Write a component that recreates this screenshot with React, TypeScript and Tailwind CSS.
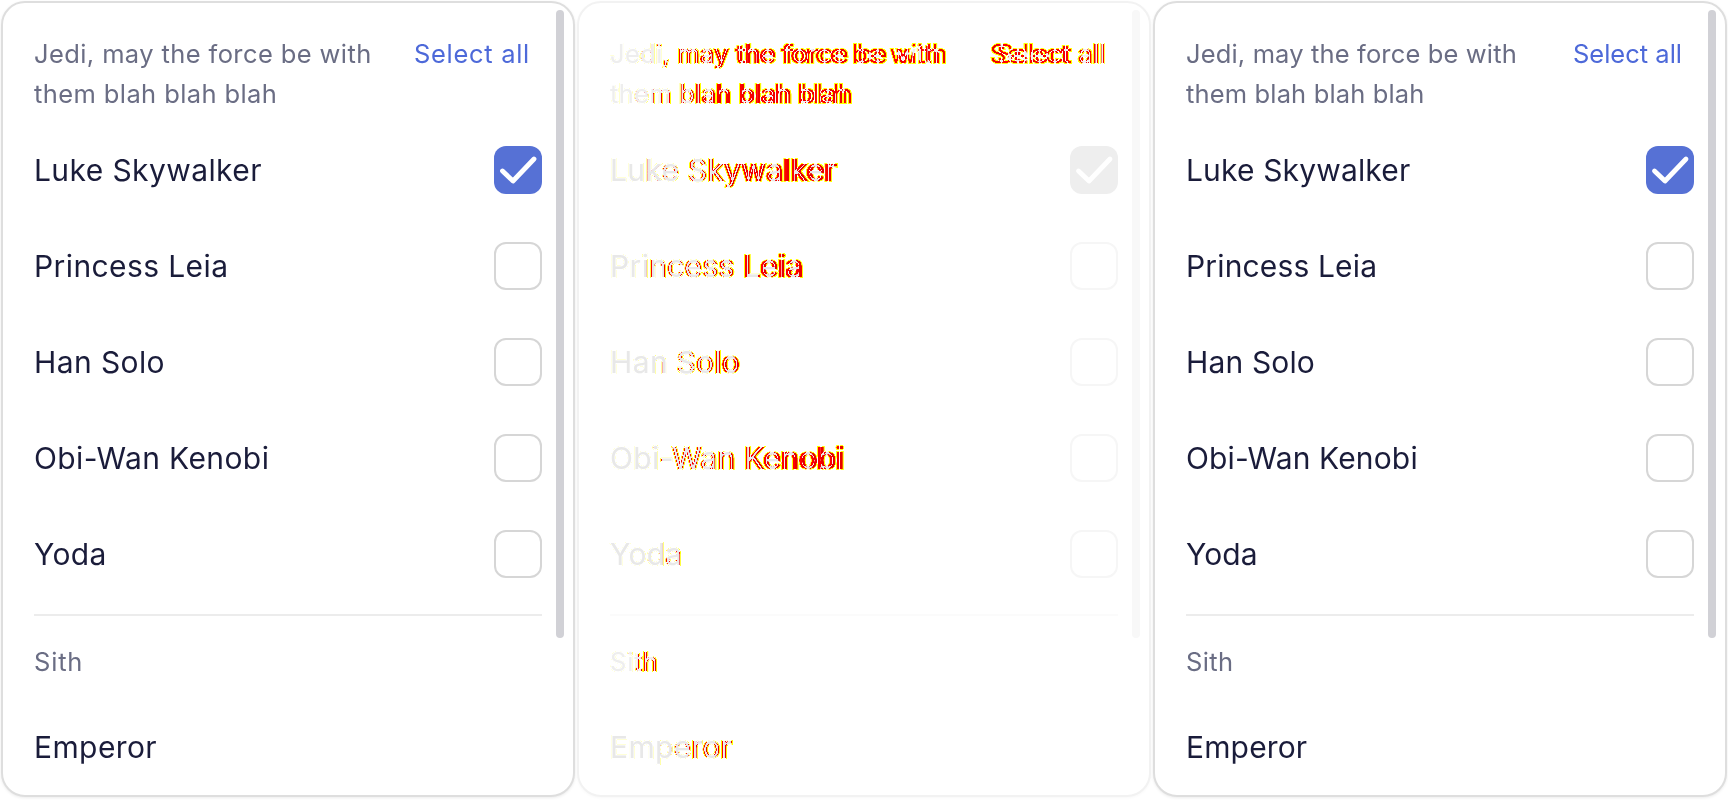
import React from 'react';

type Mode = 'expected' | 'diff' | 'actual';

const jedi = [
  { name: 'Luke Skywalker', checked: true },
  { name: 'Princess Leia', checked: false },
  { name: 'Han Solo', checked: false },
  { name: 'Obi-Wan Kenobi', checked: false },
  { name: 'Yoda', checked: false },
];

type LabelProps = {
  mode: Mode;
  text: string;
  size: string;
  color: string;  // normal colour
  faded: string;  // colour in the diff column
  track: string;  // expected render runs a little wider
  trackB: string; // actual render
  right?: boolean;
  wrap?: boolean;
};

// diff column: faded text, then both renders xor-ed on top (red core, yellow fringe)
const Label = ({ mode, text, size, color, faded, track, trackB, right, wrap }: LabelProps) => {
  const box = `${size} ${wrap ? '' : 'whitespace-nowrap'} ${right ? 'text-right' : ''}`;
  if (mode === 'expected') return <div className={`${box} ${color} ${track}`}>{text}</div>;
  if (mode === 'actual') return <div className={`${box} ${color} ${trackB}`}>{text}</div>;
  return (
    <div className={`relative ${box}`}>
      <div className={`${faded} ${track}`}>{text}</div>
      <div className="absolute inset-0 isolate bg-white mix-blend-multiply brightness-[1.35] contrast-[2]">
        <div className={`absolute inset-0 text-[#ffff00] [-webkit-text-stroke:2px_#ffff00] ${track}`}>{text}</div>
        <div className={`absolute inset-0 text-[#0000ff] [-webkit-text-stroke:2px_#0000ff] mix-blend-difference ${trackB}`}>{text}</div>
      </div>
      <div className="absolute inset-0 isolate bg-white mix-blend-multiply brightness-150 contrast-[4]">
        <div className={`absolute inset-0 text-[#ff0000] ${track}`}>{text}</div>
        <div className={`absolute inset-0 text-[#00ffff] mix-blend-difference ${trackB}`}>{text}</div>
      </div>
    </div>
  );
};

const Box = ({ checked, diff }: { checked: boolean; diff: boolean }) => {
  if (!checked)
    return (
      <div className={`h-12 w-12 rounded-[12px] border-2 ${diff ? 'border-[#f6f6f6]' : 'border-[#d6d6d6]'}`} />
    );
  return (
    <div className={`flex h-12 w-12 items-center justify-center rounded-[12px] ${diff ? 'bg-[#eeeeee]' : 'bg-[#5671d5]'}`}>
      <svg viewBox="0 0 48 48" className="h-12 w-12" fill="none">
        <path d="M8.5 25 L19 35 L40 13" stroke="#fff" strokeWidth="4.8" strokeLinecap="round" strokeLinejoin="round" />
      </svg>
    </div>
  );
};

const Panel = ({ mode }: { mode: Mode }) => {
  const diff = mode === 'diff';
  const item = {
    size: 'text-[30px] leading-10',
    color: 'text-[#1a1c3a]',
    faded: 'text-[#e8e8e8]',
    track: 'tracking-[0.4px]',
    trackB: 'tracking-[0.15px]',
  };
  const muted = {
    size: 'text-[25.5px] leading-10',
    color: 'text-[#6a6d84]',
    faded: 'text-[#eeeeee]',
    track: 'tracking-[0.4px]',
    trackB: 'tracking-[0.15px]',
  };

  return (
    <div
      className={`relative m-px h-[796px] overflow-hidden rounded-[24px] border-2 bg-white px-[31px] pt-[31px] ${
        diff ? 'border-[#f2f2f2] shadow-[0_1px_3px_rgba(0,0,0,0.03)]' : 'border-[#dedede] shadow-[0_1px_3px_rgba(0,0,0,0.08)]'
      }`}
    >
      {/* header */}
      <div className="flex items-start justify-between">
        <div className="w-[352px]">
          <Label mode={mode} wrap text="Jedi, may the force be with them blah blah blah" {...muted} />
        </div>
        <div className="mr-3">
          <Label
            mode={mode}
            right
            text="Select all"
            {...muted}
            color="text-[#4d69d9]"
            faded="text-[#f0f0f0]"
            track="tracking-[0.7px]"
            trackB="tracking-[0px]"
          />
        </div>
      </div>

      {/* jedi */}
      <div className="mt-2">
        {jedi.map((j) => (
          <div key={j.name} className="flex h-24 items-center justify-between">
            <Label mode={mode} text={j.name} {...item} />
            <Box checked={j.checked} diff={diff} />
          </div>
        ))}
      </div>

      <div className={`mt-3 h-0.5 ${diff ? 'bg-[#fbfbfb]' : 'bg-[#ececec]'}`} />

      {/* sith */}
      <div className="pt-[26px] pb-[17px]">
        <Label mode={mode} text="Sith" {...muted} track="tracking-[0.8px]" trackB="tracking-[0.4px]" />
      </div>
      <div className="flex h-24 items-center">
        <Label mode={mode} text="Emperor" {...item} />
      </div>

      {/* scroll thumb */}
      <div className={`absolute left-[553px] top-[7px] h-[628px] w-2 rounded-full ${diff ? 'bg-[#f8f8f8]' : 'bg-[#d1d1d6]'}`} />
    </div>
  );
};

export default function App() {
  return (
    <div className="flex h-[800px] w-[1728px] overflow-hidden bg-white [font-family:Inter,'Liberation_Sans',sans-serif]">
      <div className="w-[576px]">
        <Panel mode="expected" />
      </div>
      <div className="w-[576px]">
        <Panel mode="diff" />
      </div>
      <div className="w-[576px]">
        <Panel mode="actual" />
      </div>
    </div>
  );
}
